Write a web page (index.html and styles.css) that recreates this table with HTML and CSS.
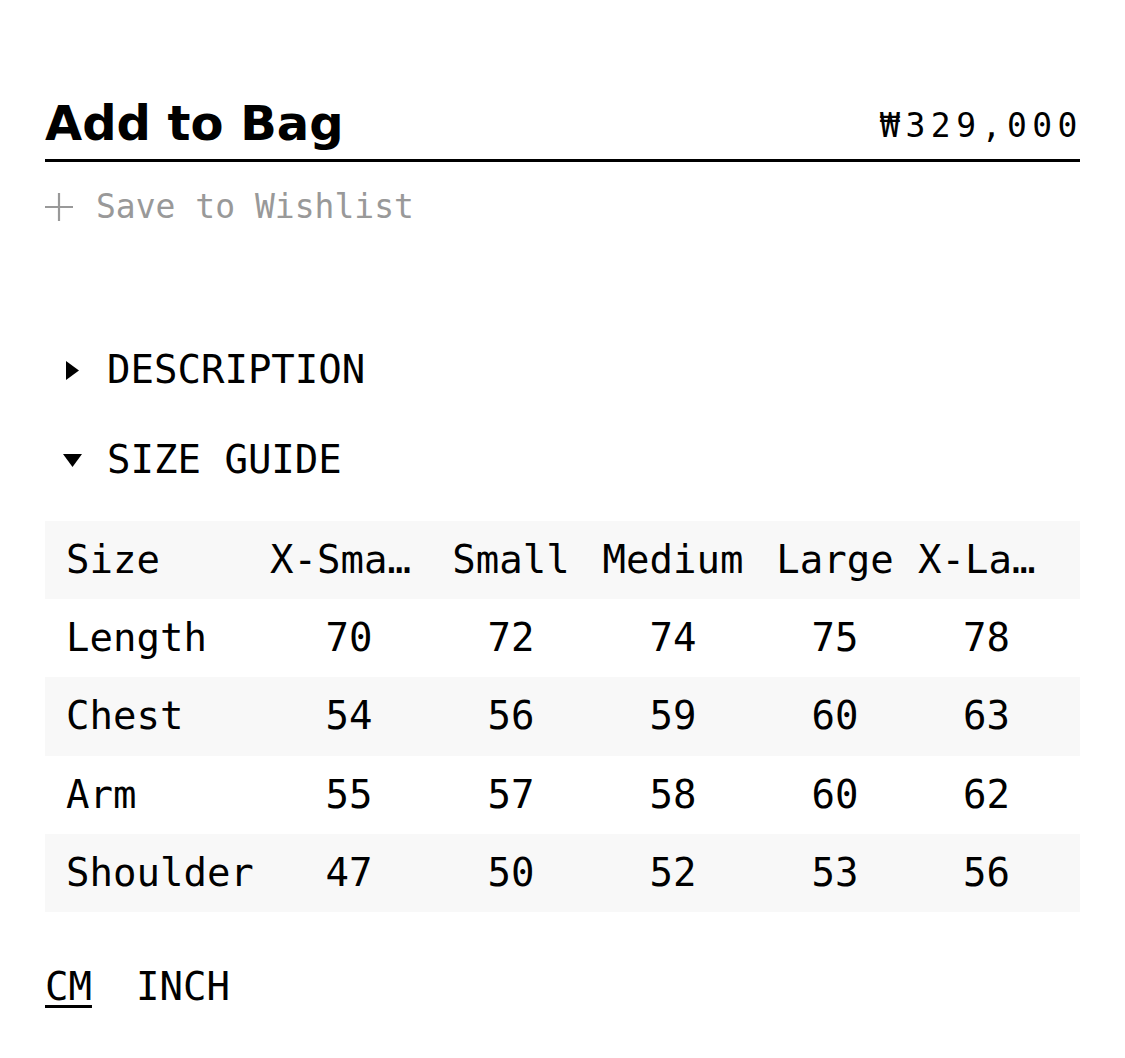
FILE: index.html
```html
<!DOCTYPE html>
<html lang="en">
<head>
<meta charset="utf-8">
<title>Add to Bag</title>
<link rel="stylesheet" href="styles.css">
</head>
<body>
<main class="page">
  <div class="bag">
    <h1 class="bag-title">Add to Bag</h1>
    <span class="price">₩329,000</span>
  </div>
  <div class="wishlist">
    <svg class="plus" width="28" height="28" viewBox="0 0 28 28" aria-hidden="true">
      <path d="M14 0V28M0 14H28" stroke="#999" stroke-width="2.2" fill="none"/>
    </svg>
    <span>Save to Wishlist</span>
  </div>

  <div class="section">
    <div class="summary">
      <span class="marker"><svg width="13" height="19" viewBox="0 0 13 19"><path d="M0 0L13 9.5L0 19Z" fill="#000"/></svg></span>
      <span>DESCRIPTION</span>
    </div>
  </div>
  <div class="section section-open">
    <div class="summary">
      <span class="marker"><svg width="19" height="13" viewBox="0 0 19 13"><path d="M0 0H19L9.5 13Z" fill="#000"/></svg></span>
      <span>SIZE GUIDE</span>
    </div>
  </div>

  <div class="table">
    <div class="row shade head">
      <div class="cell first">Size</div>
      <div class="cell">X-Small</div>
      <div class="cell">Small</div>
      <div class="cell">Medium</div>
      <div class="cell">Large</div>
      <div class="cell">X-Large</div>
    </div>
    <div class="row">
      <div class="cell first">Length</div>
      <div class="cell">70</div><div class="cell">72</div><div class="cell">74</div><div class="cell">75</div><div class="cell">78</div>
    </div>
    <div class="row shade">
      <div class="cell first">Chest</div>
      <div class="cell">54</div><div class="cell">56</div><div class="cell">59</div><div class="cell">60</div><div class="cell">63</div>
    </div>
    <div class="row">
      <div class="cell first">Arm</div>
      <div class="cell">55</div><div class="cell">57</div><div class="cell">58</div><div class="cell">60</div><div class="cell">62</div>
    </div>
    <div class="row shade">
      <div class="cell first">Shoulder</div>
      <div class="cell">47</div><div class="cell">50</div><div class="cell">52</div><div class="cell">53</div><div class="cell">56</div>
    </div>
  </div>

  <div class="units">
    <span class="unit active">CM</span>
    <span class="unit">INCH</span>
  </div>
</main>
</body>
</html>
```
FILE: styles.css
```css
html, body {
  margin: 0;
  padding: 0;
  background: #fff;
}

.page {
  padding: 95px 45px 0 45px;
  font-family: "DejaVu Sans Mono", "Liberation Mono", monospace;
  color: #000;
}

.bag {
  display: flex;
  justify-content: space-between;
  align-items: flex-end;
  border-bottom: 3px solid #000;
  padding-bottom: 8px;
}

.bag-title {
  margin: 0;
  font-family: "DejaVu Sans", "Liberation Sans", sans-serif;
  font-weight: 700;
  font-size: 48px;
  line-height: 56px;
  letter-spacing: 0;
}

.price {
  font-size: 33px;
  line-height: 40px;
  letter-spacing: 5.5px;
  margin-right: -3px;
  margin-bottom: 5px;
}

.wishlist {
  display: flex;
  align-items: center;
  gap: 23px;
  margin-top: 25px;
  font-size: 33px;
  line-height: 40px;
  color: #999;
}

.plus {
  display: block;
  flex: none;
}

.section {
  margin-top: 121px;
}

.section-open {
  margin-top: 46px;
}

.summary {
  display: flex;
  align-items: center;
  font-size: 39px;
  line-height: 44px;
}

.marker {
  width: 19px;
  height: 19px;
  margin-left: 18px;
  margin-right: 25px;
  display: flex;
  align-items: center;
  justify-content: center;
}

.marker svg {
  display: block;
}

.table {
  margin-top: 39px;
  font-size: 39px;
}

.row {
  display: grid;
  grid-template-columns: 202px 162px 162px 162px 162px 141px;
  height: 78.2px;
  align-items: center;
  padding: 0 23px 0 21px;
}

.shade {
  background: #f8f8f8;
}

.cell {
  text-align: center;
  white-space: nowrap;
  overflow: hidden;
  text-overflow: ellipsis;
  padding: 0 2px;
  line-height: 44px;
}

.cell.first {
  text-align: left;
  padding: 0;
  overflow: visible;
}

.units {
  display: flex;
  gap: 44px;
  margin-top: 53px;
  font-size: 39px;
  line-height: 44px;
}

.unit.active {
  text-decoration: underline;
  text-decoration-thickness: 3px;
  text-underline-offset: 5px;
}
```
